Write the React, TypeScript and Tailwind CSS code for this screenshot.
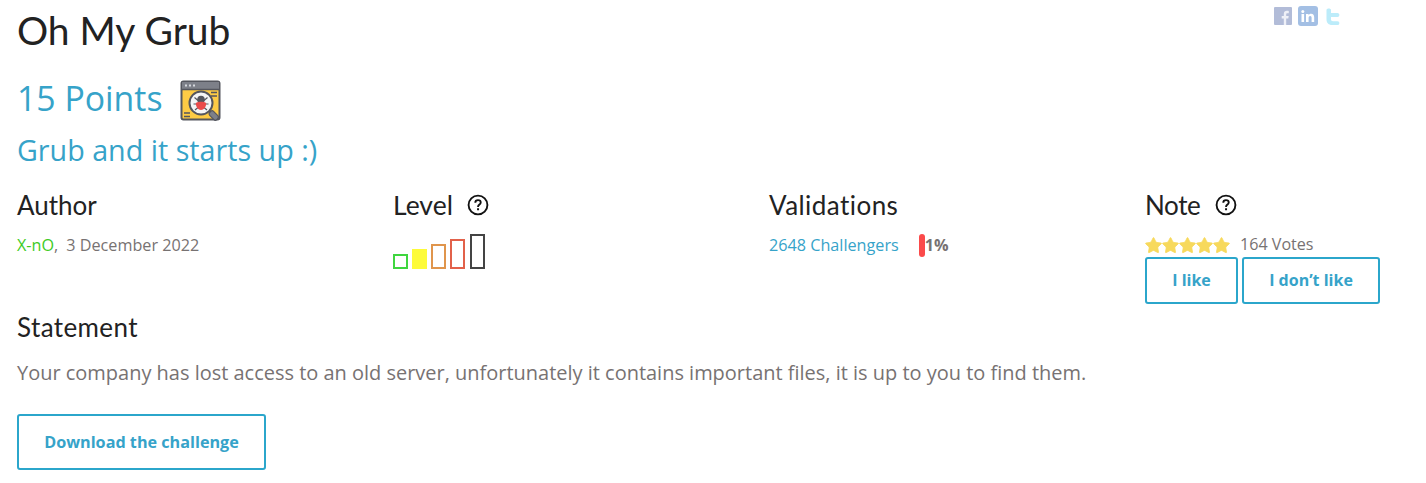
import { Star } from "lucide-react";

const heading = "font-['Lato',sans-serif] text-[#222222]";

function HelpIcon() {
  return (
    <svg width="22" height="22" viewBox="0 0 21 21" fill="none">
      <circle cx="10.5" cy="10.5" r="9" stroke="#111" strokeWidth="1.8" />
      <path d="M7.9 8.300c0-1.500 1.100-2.400 2.600-2.400s2.600.9 2.600 2.200c0 1-.5 1.500-1.300 2-.8.5-1.200.9-1.200 1.800v.4" stroke="#111" strokeWidth="1.800" fill="none" />
      <rect x="9.600" y="13.600" width="1.900" height="1.900" fill="#111" />
    </svg>
  );
}

function BugIcon() {
  return (
    <svg width="42" height="42" viewBox="0 0 42 42" className="mt-[6px] block blur-[0.4px]">
      <rect x="1.500" y="1.500" width="38" height="38" rx="2" fill="#fdcb45" stroke="#54565e" strokeWidth="2" />
      <rect x="2" y="2" width="37" height="7" fill="#7d8089" />
      <path d="M1.500 9.500h38" stroke="#54565e" strokeWidth="1.500" />
      <rect x="5" y="4.500" width="2" height="2" fill="#d5d8de" />
      <rect x="9" y="4.500" width="2" height="2" fill="#d5d8de" />
      <rect x="13" y="4.500" width="2" height="2" fill="#d5d8de" />
      <path d="M31 12.500h6M31 16h6M4 33h6M4 36.500h6" stroke="#54565e" strokeWidth="1.300" />
      <circle cx="21" cy="23" r="11.500" fill="#f4f5f6" stroke="#54565e" strokeWidth="2" />
      <path d="M14.500 17.500l3.500 3M27.500 17.500l-3.500 3M13.500 24h3.500M28.500 24H25M15 30l3-2.500M27 30l-3-2.500" stroke="#54565e" strokeWidth="1.200" />
      <circle cx="21" cy="19.500" r="3.800" fill="#54565e" />
      <path d="M15.800 23c2-1.700 8.400-1.700 10.400 0 0 4-2.300 7-5.200 7s-5.200-3-5.200-7z" fill="#ea4a4a" />
      <path d="M29.500 31l2.500 2.500" stroke="#54565e" strokeWidth="2" />
      <rect x="31" y="30.500" width="5.500" height="10" rx="2" transform="rotate(-45 33.750 35.500)" fill="#7d8089" stroke="#54565e" strokeWidth="1.200" />
    </svg>
  );
}

function SocialIcons() {
  return (
    <div className="flex items-start blur-[0.4px]">
      <svg width="18" height="18" viewBox="0 0 18 18" className="mt-[7px]">
        <rect width="18" height="18" rx="1" fill="#b2bcd8" />
        <path d="M12.200 18v-6.500h2.100l.4-2.600h-2.500V7.400c0-.8.3-1.200 1.200-1.200h1.400V3.900c-.4 0-1.100-.1-1.900-.1-1.900 0-3.100 1.100-3.100 3.300v1.800H7.700v2.600h2.100V18z" fill="#eef0f7" />
      </svg>
      <svg width="20" height="20" viewBox="0 0 20 20" className="ml-[6px] mt-[6px]">
        <rect width="20" height="20" rx="3" fill="#a3bfe4" />
        <rect x="3.500" y="8" width="2.600" height="8" fill="#fff" />
        <circle cx="4.800" cy="5.500" r="1.500" fill="#fff" />
        <path d="M8 8h2.500v1.200c.5-.8 1.400-1.400 2.600-1.400 2.200 0 3.100 1.400 3.100 3.700V16h-2.600v-4c0-1.200-.4-1.900-1.400-1.900s-1.600.8-1.600 1.900v4H8z" fill="#fff" />
      </svg>
      <svg width="17" height="19" viewBox="0 0 17 19" className="ml-[7px] mt-[7px]">
        <path d="M1.500 3c0-2 4.500-2 4.500 0v3h6.500c2.500 0 2.500 4 0 4H6v2.500c0 1 .8 1.700 2 1.700h4.500c2.500 0 2.500 3.800 0 3.800H7c-3.300 0-5.500-2.200-5.500-5.500z" fill="#bcecfa" />
      </svg>
    </div>
  );
}

function LevelBars() {
  return (
    <div className="mt-[10px] flex h-[37px] items-end gap-[4px]">
      <div className="h-[15px] w-[15px] border-2 border-[#3fd63f]" />
      <div className="h-[20px] w-[15px] bg-[#fdfb3a]" />
      <div className="h-[25px] w-[15px] border-2 border-[#e0954c]" />
      <div className="h-[30px] w-[15px] border-2 border-[#e2614a]" />
      <div className="ml-[1px] h-[35px] w-[15px] border-2 border-[#444444]" />
    </div>
  );
}

export default function App() {
  return (
    <div className="relative h-[483px] overflow-hidden bg-white pl-[17px] pr-[46px] font-['Open_Sans',sans-serif] text-[#777272]">
      <div className="absolute left-[1274px] top-0">
        <SocialIcons />
      </div>
      <h1 className={`${heading} pt-[4px] text-[39px] leading-[52px]`}>Oh My Grub</h1>
      <div className="mt-[20px] flex h-[44px] items-center gap-[17px]">
        <span className="text-[33.800px] leading-[44px] text-[#36a3c9]">15 Points</span>
        <BugIcon />
      </div>
      <h2 className="mt-[11px] text-[28.700px] leading-[38px] text-[#36a3c9]">Grub and it starts up :)</h2>

      <div className="mt-[19px] grid h-[122px] grid-cols-[376px_376px_376px_1fr]">
        <div>
          <h3 className={`${heading} text-[26px] leading-[34px]`}>Author</h3>
          <p className="mt-[11px] text-[16.200px] leading-[24px]">
            <span className="text-[#3ecb1f]">X-nO</span>,
            <span className="ml-[8px]">3 December 2022</span>
          </p>
        </div>
        <div>
          <div className="flex items-center gap-[14px]">
            <h3 className={`${heading} text-[26.500px] leading-[34px]`}>Level</h3>
            <HelpIcon />
          </div>
          <LevelBars />
        </div>
        <div>
          <h3 className={`${heading} text-[26px] leading-[34px] tracking-[0.45px]`}>Validations</h3>
          <div className="mt-[11px] flex items-center text-[16.200px] leading-[24px]">
            <span className="text-[#36a3c9]">2648 Challengers</span>
            <span className="ml-[20px] h-[23px] w-[6px] rounded-[3px] bg-[#fb4a4a]" />
            <span className="font-bold">1%</span>
          </div>
        </div>
        <div>
          <div className="flex items-center gap-[15px]">
            <h3 className={`${heading} text-[26px] leading-[34px] tracking-[-0.4px]`}>Note</h3>
            <HelpIcon />
          </div>
          <div className="mt-[13px] flex h-[18px] items-center text-[16.100px]">
            <div className="flex">
              {[0, 1, 2, 3, 4].map((i) => (
                <Star key={i} size={19} strokeWidth={1} className="-mx-[1px] mt-[2px] fill-[#f7d95c] text-[#f7d95c]" />
              ))}
            </div>
            <span className="ml-[10px]">164 Votes</span>
          </div>
          <div className="mt-[4px] flex gap-[4px] text-[16px] font-bold text-[#36a3c9]">
            <button className="h-[47px] w-[93px] rounded-[3px] border-2 border-[#2ba6cb] pb-[2px]">I like</button>
            <button className="h-[47px] w-[138px] rounded-[3px] border-2 border-[#2ba6cb] pb-[2px]">I don’t like</button>
          </div>
        </div>
      </div>

      <h3 className={`${heading} text-[26px] leading-[34px] tracking-[0.4px]`}>Statement</h3>
      <p className="mt-[15px] text-[19.980px] leading-[28px]">
        Your company has lost access to an old server, unfortunately it contains important files, it is up to you to find them.
      </p>
      <button className="mt-[27px] h-[56px] w-[249px] rounded-[3px] border-2 border-[#2ba6cb] text-[16.200px] font-bold text-[#36a3c9]">
        Download the challenge
      </button>
    </div>
  );
}
